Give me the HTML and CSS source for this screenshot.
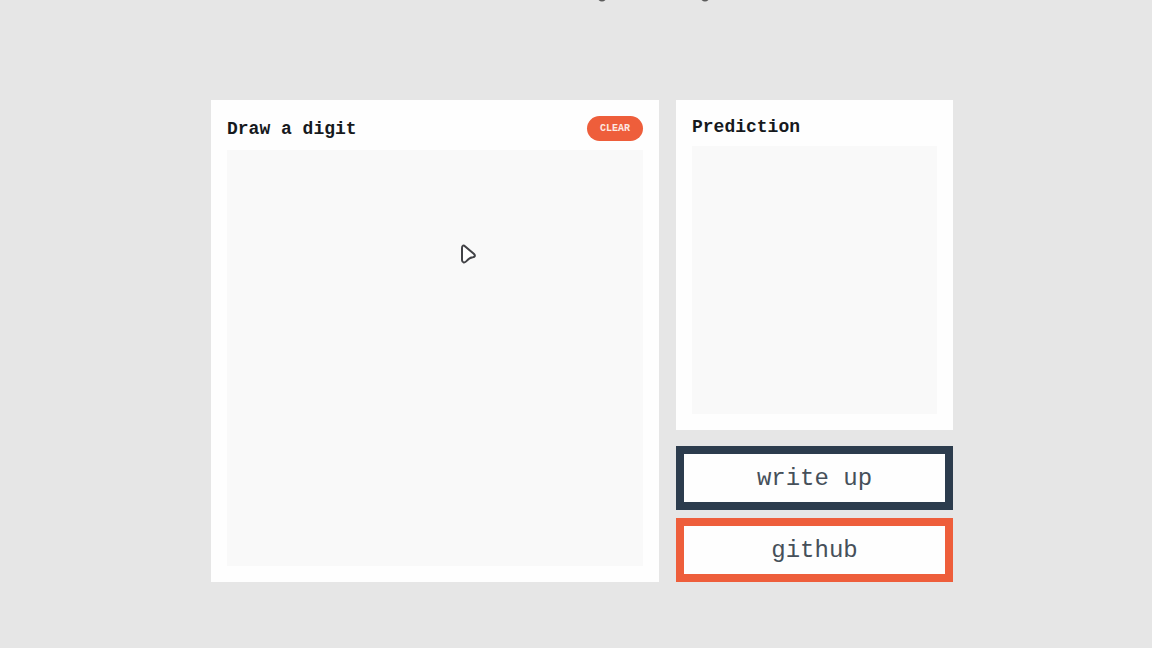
FILE: index.html
```
<!DOCTYPE html>
<html lang="en">
<head>
<meta charset="utf-8">
<meta name="viewport" content="width=device-width, initial-scale=1">
<title>Draw a digit</title>
<link rel="stylesheet" href="styles.css">
</head>
<body>
<div class="top">
  <svg class="marks" viewBox="0 0 112 3" aria-hidden="true"><path d="M0 -2Q4 3 8 -2M103 -2Q107 3 111 -2"/></svg>
</div>
<main class="app">
  <section class="panel">
    <header class="panel-head">
      <h2 class="title">Draw a digit</h2>
      <button class="clear" type="button">CLEAR</button>
    </header>
    <canvas class="pad"></canvas>
  </section>
  <div class="side">
    <section class="panel result">
      <h2 class="title">Prediction</h2>
      <div class="chart"></div>
    </section>
    <nav class="links">
      <a class="link link-navy" href="#writeup">write up</a>
      <a class="link link-orange" href="#github">github</a>
    </nav>
  </div>
</main>
<svg class="cursor" viewBox="0 0 18 20" aria-hidden="true"><path d="M2 4C2 1.4 3.6 1 5.2 2.4L13.8 9.8C15.6 11.6 15 13 12.8 13.2C9.8 13.4 8.8 14.2 6.6 17C4.8 19.2 2.2 18.8 2 16.2Z"/></svg>
</body>
</html>
```
FILE: styles.css
```
* {
  box-sizing: border-box;
}

body {
  margin: 0;
  min-height: 100vh;
  padding: 0 16px 64px 28px;
  background: #e6e6e6;
  color: #16191d;
  font-family: "Liberation Mono", monospace;
}

.top {
  display: flex;
  justify-content: center;
  padding-left: 144px;
}

.marks {
  width: 112px;
  height: 3px;
  fill: none;
  stroke: #5c5c5c;
  stroke-width: 2;
}

.app {
  display: grid;
  grid-template-columns: 448fr 277fr;
  gap: 17px;
  max-width: 742px;
  margin: 97px auto 0;
}

.panel {
  display: flex;
  flex-direction: column;
  padding: 16px;
  background: #fefefe;
}

.panel-head {
  display: flex;
  align-items: center;
  justify-content: space-between;
  margin-bottom: 9px;
}

.title {
  margin: 0;
  font-size: 18px;
  line-height: 22px;
  font-weight: 700;
}

.clear {
  padding: 0 13px;
  border: 0;
  border-radius: 13px;
  background: #ee5e3b;
  color: #fde9e2;
  font: 700 10px/25px "Liberation Mono", monospace;
}

.pad {
  display: block;
  width: 100%;
  aspect-ratio: 1;
  background: #f9f9f9;
}

.side {
  display: flex;
  flex-direction: column;
  gap: 16px;
}

.result {
  flex: 1;
  gap: 8px;
}

.chart {
  flex: 1;
  background: #f9f9f9;
}

.links {
  display: flex;
  flex-direction: column;
  gap: 8px;
}

.link {
  padding: 9px 8px 7px;
  border: 8px solid;
  background: #fefefe;
  font-size: 24px;
  line-height: 32px;
  text-align: center;
  text-decoration: none;
  color: #46505a;
}

.link-navy {
  border-color: #2c3c4d;
}

.link-orange {
  border-color: #ee5e3b;
}

.cursor {
  position: absolute;
  left: 460px;
  top: 244px;
  width: 18px;
  height: 20px;
  fill: #fff;
  stroke: #414246;
  stroke-width: 2;
  stroke-linejoin: round;
  pointer-events: none;
}
```
